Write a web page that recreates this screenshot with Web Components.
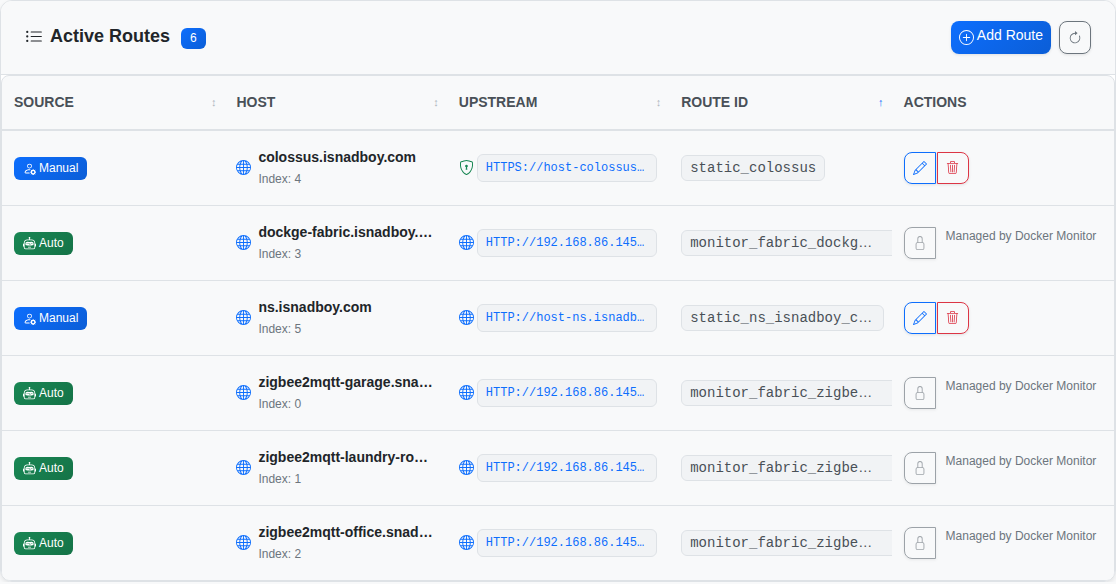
<!DOCTYPE html>
<html lang="en">
<head>
<meta charset="utf-8">
<title>Active Routes</title>
<style>
  body { margin: 0; background: #f8f9fa; color: #212529; font: 14px/21px "Liberation Sans", Arial, sans-serif; }
</style>
</head>
<body>
<routes-card>
  <routes-title slot="title" count="6">Active Routes</routes-title>
  <action-button slot="actions" variant="primary" icon="plus-circle">Add Route</action-button>
  <action-button slot="actions" variant="secondary" icon="arrow-clockwise" label="Refresh"></action-button>
  <routes-table></routes-table>
</routes-card>
<script>
const ICONS = {
  'list': '<path fill-rule="evenodd" d="M5 11.5a.5.5 0 0 1 .5-.5h9a.5.5 0 0 1 0 1h-9a.5.5 0 0 1-.5-.5m0-4a.5.5 0 0 1 .5-.5h9a.5.5 0 0 1 0 1h-9a.5.5 0 0 1-.5-.5m0-4a.5.5 0 0 1 .5-.5h9a.5.5 0 0 1 0 1h-9a.5.5 0 0 1-.5-.5m-3 1a1 1 0 1 0 0-2 1 1 0 0 0 0 2m0 4a1 1 0 1 0 0-2 1 1 0 0 0 0 2m0 4a1 1 0 1 0 0-2 1 1 0 0 0 0 2"/>',
  'plus-circle': '<path d="M8 15A7 7 0 1 1 8 1a7 7 0 0 1 0 14m0 1A8 8 0 1 0 8 0a8 8 0 0 0 0 16"/><path d="M8 4a.5.5 0 0 1 .5.5v3h3a.5.5 0 0 1 0 1h-3v3a.5.5 0 0 1-1 0v-3h-3a.5.5 0 0 1 0-1h3v-3A.5.5 0 0 1 8 4"/>',
  'arrow-clockwise': '<path fill-rule="evenodd" d="M8 3a5 5 0 1 0 4.546 2.914.5.5 0 0 1 .908-.417A6 6 0 1 1 8 2z"/><path d="M8 4.466V.534a.25.25 0 0 1 .41-.192l2.36 1.966c.12.1.12.284 0 .384L8.41 4.658A.25.25 0 0 1 8 4.466"/>',
  'person-gear': '<path d="M11 5a3 3 0 1 1-6 0 3 3 0 0 1 6 0M8 7a2 2 0 1 0 0-4 2 2 0 0 0 0 4m.256 7a4.5 4.5 0 0 1-.229-1.004H3c.001-.246.154-.986.832-1.664C4.484 10.68 5.711 10 8 10q.39 0 .74.025c.226-.341.496-.65.804-.918Q8.844 9.002 8 9c-5 0-6 3-6 4s1 1 1 1z"/><circle cx="12.5" cy="12.5" r="2.2" fill="none" stroke="currentColor" stroke-width="1.7"/><path fill="none" stroke="currentColor" stroke-width="1.2" d="M12.5 9v1.2M12.5 14.8V16M9 12.5h1.2M14.8 12.5H16M10 10l.9.9M14.1 14.1l.9.9M15 10l-.9.9M10.9 14.1l-.9.9"/>',
  'robot': '<path d="M6 12.5a.5.5 0 0 1 .5-.5h3a.5.5 0 0 1 0 1h-3a.5.5 0 0 1-.5-.5M3 8.062C3 6.76 4.235 5.765 5.53 5.886a26.6 26.6 0 0 0 4.94 0C11.765 5.765 13 6.76 13 8.062v1.157a.93.93 0 0 1-.765.935c-.845.147-2.34.346-4.235.346s-3.39-.2-4.235-.346A.93.93 0 0 1 3 9.219zm4.542-.827a.25.25 0 0 0-.217.068l-.92.9a25 25 0 0 1-1.871-.183.25.25 0 0 0-.068.495c.55.076 1.232.149 2.02.193a.25.25 0 0 0 .189-.071l.754-.736.847 1.71a.25.25 0 0 0 .404.062l.932-.97a25 25 0 0 0 1.922-.188.25.25 0 0 0-.068-.495c-.538.074-1.207.145-1.98.189a.25.25 0 0 0-.166.076l-.754.785-.842-1.7a.25.25 0 0 0-.182-.135"/><path d="M8.5 1.866a1 1 0 1 0-1 0V3h-2A4.5 4.5 0 0 0 1 7.5V8a1 1 0 0 0-1 1v2a1 1 0 0 0 1 1v1a2 2 0 0 0 2 2h10a2 2 0 0 0 2-2v-1a1 1 0 0 0 1-1V9a1 1 0 0 0-1-1v-.5A4.5 4.5 0 0 0 10.5 3h-2zM14 7.5V13a1 1 0 0 1-1 1H3a1 1 0 0 1-1-1V7.5A3.5 3.5 0 0 1 5.5 4h5A3.5 3.5 0 0 1 14 7.5"/>',
  'globe': '<path d="M0 8a8 8 0 1 1 16 0A8 8 0 0 1 0 8m7.5-6.923c-.67.204-1.335.82-1.887 1.855A8 8 0 0 0 5.145 4H7.5zM4.09 4a9.3 9.3 0 0 1 .64-1.539 7 7 0 0 1 .597-.933A7.03 7.03 0 0 0 2.255 4zm-.582 3.5c.03-.877.138-1.718.312-2.5H1.674a7 7 0 0 0-.656 2.5zM4.847 5a12.5 12.5 0 0 0-.338 2.5H7.5V5zM8.5 5v2.5h2.99a12.5 12.5 0 0 0-.337-2.5zM4.51 8.5a12.5 12.5 0 0 0 .337 2.5H7.5V8.5zm3.99 0V11h2.653c.187-.765.306-1.608.338-2.5zM5.145 12q.208.58.468 1.068c.552 1.035 1.218 1.65 1.887 1.855V12zm.182 2.472a7 7 0 0 1-.597-.933A9.3 9.3 0 0 1 4.09 12H2.255a7 7 0 0 0 3.072 2.472M3.82 11a13.7 13.7 0 0 1-.312-2.5h-2.49c.062.89.291 1.733.656 2.5zm6.853 3.472A7 7 0 0 0 13.745 12H11.91a9.3 9.3 0 0 1-.64 1.539 7 7 0 0 1-.597.933M8.5 12v2.923c.67-.204 1.335-.82 1.887-1.855q.26-.487.468-1.068zm3.68-1h2.146c.365-.767.594-1.61.656-2.5h-2.49a13.7 13.7 0 0 1-.312 2.5m2.802-3.5a7 7 0 0 0-.656-2.5H12.18c.174.782.282 1.623.312 2.5zM11.27 2.461c.247.464.462.98.64 1.539h1.835a7 7 0 0 0-3.072-2.472c.218.284.418.598.597.933M10.855 4a8 8 0 0 0-.468-1.068C9.835 1.897 9.17 1.282 8.5 1.077V4z"/>',
  'shield-lock': '<path d="M5.338 1.59a61 61 0 0 0-2.837.856.48.48 0 0 0-.328.39c-.554 4.157.726 7.19 2.253 9.188a10.7 10.7 0 0 0 2.287 2.233c.346.244.652.42.893.533q.18.085.293.118a1 1 0 0 0 .101.025 1 1 0 0 0 .1-.025q.114-.034.294-.118c.24-.113.547-.29.893-.533a10.7 10.7 0 0 0 2.287-2.233c1.527-1.997 2.807-5.031 2.253-9.188a.48.48 0 0 0-.328-.39c-.651-.213-1.75-.56-2.837-.855C9.552 1.29 8.531 1.067 8 1.067c-.53 0-1.552.223-2.662.524zM5.072.56C6.157.265 7.31 0 8 0s1.843.265 2.928.56c1.11.3 2.229.655 2.887.87a1.54 1.54 0 0 1 1.044 1.262c.596 4.477-.787 7.795-2.465 9.99a11.8 11.8 0 0 1-2.517 2.453 7 7 0 0 1-1.048.625c-.28.132-.581.24-.829.24s-.548-.108-.829-.24a7 7 0 0 1-1.048-.625 11.8 11.8 0 0 1-2.517-2.453C1.928 10.487.545 7.169 1.141 2.692A1.54 1.54 0 0 1 2.185 1.43 63 63 0 0 1 5.072.56"/><path d="M9.5 6.5a1.5 1.5 0 0 1-1 1.415l.385 1.99a.5.5 0 0 1-.491.595h-.788a.5.5 0 0 1-.49-.595l.384-1.99a1.5 1.5 0 1 1 2-1.415"/>',
  'pencil': '<path d="M12.146.146a.5.5 0 0 1 .708 0l3 3a.5.5 0 0 1 0 .708l-10 10a.5.5 0 0 1-.168.11l-5 2a.5.5 0 0 1-.65-.65l2-5a.5.5 0 0 1 .11-.168zM11.207 2.5 13.5 4.793 14.793 3.5 12.5 1.207zm1.586 3L10.5 3.207 4 9.707V10h.5a.5.5 0 0 1 .5.5v.5h.5a.5.5 0 0 1 .5.5v.5h.293zm-9.761 5.175-.106.106-1.528 3.821 3.821-1.528.106-.106A.5.5 0 0 1 5 12.5V12h-.5a.5.5 0 0 1-.5-.5V11h-.5a.5.5 0 0 1-.468-.325"/>',
  'trash': '<path d="M6.5 1h3a.5.5 0 0 1 .5.5v1H6v-1a.5.5 0 0 1 .5-.5M11 2.5v-1A1.5 1.5 0 0 0 9.5 0h-3A1.5 1.5 0 0 0 5 1.5v1H1.5a.5.5 0 0 0 0 1h.538l.853 10.66A2 2 0 0 0 4.885 16h6.23a2 2 0 0 0 1.994-1.84l.853-10.66h.538a.5.5 0 0 0 0-1zm1.958 1-.846 10.58a1 1 0 0 1-.997.92h-6.23a1 1 0 0 1-.997-.92L3.042 3.5zm-7.487 1a.5.5 0 0 1 .528.47l.5 8.5a.5.5 0 0 1-.998.06L5 5.03a.5.5 0 0 1 .47-.53zm5.058 0a.5.5 0 0 1 .47.53l-.5 8.5a.5.5 0 1 1-.998-.06l.5-8.5a.5.5 0 0 1 .528-.47M8 4.5a.5.5 0 0 1 .5.5v8.5a.5.5 0 0 1-1 0V5a.5.5 0 0 1 .5-.5"/>',
  'lock': '<path d="M8 1a2 2 0 0 1 2 2v4H6V3a2 2 0 0 1 2-2m3 6V3a3 3 0 0 0-6 0v4a2 2 0 0 0-2 2v5a2 2 0 0 0 2 2h6a2 2 0 0 0 2-2V9a2 2 0 0 0-2-2M5 8h6a1 1 0 0 1 1 1v5a1 1 0 0 1-1 1H5a1 1 0 0 1-1-1V9a1 1 0 0 1 1-1"/>'
};

class Base extends HTMLElement {
  connectedCallback() {
    if (this.shadowRoot) return;
    this.attachShadow({ mode: 'open' }).innerHTML = this.render();
  }
}

customElements.define('bi-icon', class extends Base {
  render() {
    return `<style>
      :host { display: block; flex: none; width: var(--icon-size, 15px); height: var(--icon-size, 15px); }
      svg { display: block; width: 100%; height: 100%; }
    </style>
    <svg viewBox="0 0 16 16" fill="currentColor" aria-hidden="true">${ICONS[this.getAttribute('name')]}</svg>`;
  }
});

customElements.define('routes-card', class extends Base {
  render() {
    return `<style>
      :host { display: block; box-sizing: border-box; background: #fff; border: 1px solid #dee2e6; border-radius: 12px; box-shadow: 0 2px 4px rgba(0,0,0,.075); overflow: hidden; }
      header { display: flex; align-items: center; justify-content: space-between; height: 73px; padding: 0 24px; background: #f8f9fa; border-bottom: 1px solid #dee2e6; }
      .actions { display: flex; gap: 8px; }
    </style>
    <header><slot name="title"></slot><div class="actions"><slot name="actions"></slot></div></header>
    <slot></slot>`;
  }
});

customElements.define('routes-title', class extends Base {
  render() {
    return `<style>
      :host { display: flex; align-items: center; padding-bottom: 2px; --icon-size: 18px; }
      h5 { margin: 0 11px 2px 7px; font-size: 18px; line-height: 22px; font-weight: 700; }
      .count { margin-top: 4px; padding: 0 9px; border-radius: 6px; color: #fff; background: linear-gradient(135deg, #0d6efd, #0b5ed7); font-size: 12px; line-height: 21px; }
    </style>
    <bi-icon name="list"></bi-icon><h5><slot></slot></h5><span class="count">${this.getAttribute('count')}</span>`;
  }
});

customElements.define('action-button', class extends Base {
  render() {
    const label = this.getAttribute('label');
    return `<style>
      :host { display: block; --icon-size: 14px; }
      button { display: flex; align-items: center; justify-content: center; gap: 4px; box-sizing: border-box; min-width: 32px; height: 32px; margin: 0; padding: 0 7px; border: 1px solid; border-radius: 8px; background: transparent; font: inherit; box-shadow: 0 1px 3px rgba(0,0,0,.1); }
      :host([variant=primary]) { --icon-size: 15px; }
      :host([variant=primary]) button { height: 33px; gap: 3px; border: 0; padding: 0 8px; color: #fff; background: linear-gradient(135deg, #0d6efd, #0b5ed7); }
      :host([variant=primary]) .text { padding-bottom: 4px; }
      :host([variant=secondary]) button { height: 33px; color: #6c757d; }
      :host([variant=edit]) button { color: #0d6efd; border-radius: 8px 0 0 8px; }
      :host([variant=delete]) { --icon-size: 13px; }
      :host([variant=delete]) button { padding: 0 8px 1px 7px; color: #dc3545; border-radius: 0 8px 8px 0; }
      :host([variant=locked]) button { color: #6c757d; border-radius: 8px 0 0 8px; opacity: .65; }
    </style>
    <button type="button"${label ? ` aria-label="${label}"` : ''}${this.hasAttribute('disabled') ? ' disabled' : ''}><bi-icon name="${this.getAttribute('icon')}"></bi-icon>${label ? '' : '<span class="text"><slot></slot></span>'}</button>`;
  }
});

customElements.define('source-badge', class extends Base {
  render() {
    const manual = this.getAttribute('kind') === 'manual';
    return `<style>
      :host { display: inline-flex; align-items: center; gap: 3px; height: 23px; padding: 0 9px; border-radius: 6px; color: #fff; font-size: 12px; line-height: 21px; vertical-align: top; --icon-size: 13px;
        background: linear-gradient(135deg, ${manual ? '#0d6efd, #0b5ed7' : '#198754, #157347'}); }
      bi-icon { margin-top: 1px; }
    </style>
    <bi-icon name="${manual ? 'person-gear' : 'robot'}"></bi-icon><span>${manual ? 'Manual' : 'Auto'}</span>`;
  }
});

customElements.define('host-cell', class extends Base {
  render() {
    return `<style>
      :host { display: flex; align-items: center; gap: 7px; }
      bi-icon { margin-bottom: 1px; color: #0d6efd; }
      strong, small { display: block; white-space: nowrap; }
      small { padding-top: 1px; font-size: 12px; color: #6c757d; }
    </style>
    <bi-icon name="globe"></bi-icon><div><strong><slot></slot></strong><small>Index: ${this.getAttribute('index')}</small></div>`;
  }
});

customElements.define('upstream-cell', class extends Base {
  render() {
    const secure = this.hasAttribute('secure');
    return `<style>
      :host { display: flex; align-items: center; gap: 3px; }
      bi-icon { margin-bottom: 1px; color: ${secure ? '#198754' : '#0d6efd'}; }
      code { box-sizing: border-box; width: 180px; padding: 3px 8px; border: 1px solid #dee2e6; border-radius: 6px; background: #f1f3f5; color: #0d6efd; font: 12px/20px "Liberation Mono", "Courier New", monospace; white-space: nowrap; }
    </style>
    <bi-icon name="${secure ? 'shield-lock' : 'globe'}"></bi-icon><code><slot></slot></code>`;
  }
});

customElements.define('route-id', class extends Base {
  render() {
    return `<style>
      :host { display: flex; margin-right: -12px; overflow: hidden; }
      code { flex: none; box-sizing: border-box; padding: 2px 8px; border: 1px solid #dee2e6; border-radius: 6px; background: #f1f3f5; color: #495057; font: 14px/20px "Liberation Mono", "Courier New", monospace; white-space: nowrap; }
      :host([cut]) code { width: 203px; }
      :host([cut=long]) code { width: 260px; }
      .more { font-family: "Liberation Sans", Arial, sans-serif; line-height: 0; }
    </style>
    <code><slot></slot>${this.hasAttribute('cut') ? '<span class="more">…</span>' : ''}</code>`;
  }
});

customElements.define('row-actions', class extends Base {
  render() {
    return `<style>
      :host { display: flex; gap: 1px; }
      small { margin-left: 9px; font-size: 12px; line-height: 18px; color: #6c757d; white-space: nowrap; }
    </style>` + (this.hasAttribute('managed')
      ? `<action-button variant="locked" icon="lock" label="Locked" disabled></action-button><small>Managed by Docker Monitor</small>`
      : `<action-button variant="edit" icon="pencil" label="Edit"></action-button><action-button variant="delete" icon="trash" label="Delete"></action-button>`);
  }
});

const ROUTES = [
  ['manual', 'colossus.isnadboy.com', 4, 'HTTPS://host-colossus…', 'static_colossus', ''],
  ['auto', 'dockge-fabric.isnadboy.…', 3, 'HTTP://192.168.86.145…', 'monitor_fabric_dockg', 'long'],
  ['manual', 'ns.isnadboy.com', 5, 'HTTP://host-ns.isnadb…', 'static_ns_isnadboy_c', 'short'],
  ['auto', 'zigbee2mqtt-garage.sna…', 0, 'HTTP://192.168.86.145…', 'monitor_fabric_zigbe', 'long'],
  ['auto', 'zigbee2mqtt-laundry-ro…', 1, 'HTTP://192.168.86.145…', 'monitor_fabric_zigbe', 'long'],
  ['auto', 'zigbee2mqtt-office.snad…', 2, 'HTTP://192.168.86.145…', 'monitor_fabric_zigbe', 'long']
];

customElements.define('routes-table', class extends Base {
  render() {
    const head = [['Source', '↕'], ['Host', '↕'], ['Upstream', '↕'], ['Route ID', '↑'], ['Actions', '']];
    return `<style>
      :host { display: block; border: 1px solid #dee2e6; border-radius: 8px; background: #f8f9fa; overflow: hidden; }
      table { width: 100%; table-layout: fixed; border-collapse: separate; border-spacing: 0; }
      th { height: 53px; padding: 0 12px; border-bottom: 2px solid #dee2e6; text-align: left; color: #495057; text-transform: uppercase; }
      th div { display: flex; align-items: center; justify-content: space-between; }
      .sort { margin: 0 -4px 2px 0; font-size: 11px; line-height: 18px; font-weight: 400; color: #adb5bd; }
      .sort.on { color: #0d6efd; }
      td { height: 74px; padding: 0 12px; border-bottom: 1px solid #dee2e6; vertical-align: middle; }
      tr:last-child td { border-bottom: 0; }
    </style>
    <table>
      <thead><tr>${head.map(([t, s]) => `<th scope="col"><div>${t}${s ? `<span class="sort${s === '↑' ? ' on' : ''}">${s}</span>` : ''}</div></th>`).join('')}</tr></thead>
      <tbody>${ROUTES.map(([kind, host, index, up, id, cut]) => `<tr>
        <td><source-badge kind="${kind}"></source-badge></td>
        <td><host-cell index="${index}">${host}</host-cell></td>
        <td><upstream-cell${up.startsWith('HTTPS') ? ' secure' : ''}>${up}</upstream-cell></td>
        <td><route-id${cut ? ` cut="${cut}"` : ''}>${id}</route-id></td>
        <td><row-actions${kind === 'auto' ? ' managed' : ''}></row-actions></td>
      </tr>`).join('')}</tbody>
    </table>`;
  }
});
</script>
</body>
</html>
